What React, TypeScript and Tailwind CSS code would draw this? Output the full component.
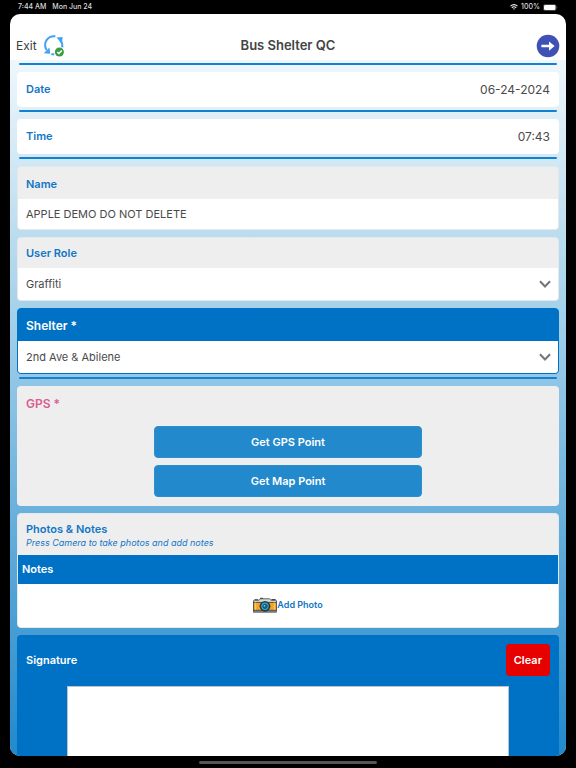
import type { ReactNode } from 'react';

function Divider() {
  return <hr className="mx-0.5 -mt-1 h-0.5 shrink-0 rounded-full border-0 bg-[#1480d0]" />;
}

function InlineField({ id, label, value }: { id: string; label: string; value: string }) {
  return (
    <div className="flex h-[35px] shrink-0 items-center justify-between rounded bg-white px-[9px]">
      <label htmlFor={id} className="text-[11px] font-semibold text-[#1276c6]">{label}</label>
      <input id={id} defaultValue={value} className="w-40 bg-transparent text-right text-xs text-[#4a4a4a] outline-none" />
    </div>
  );
}

function SelectBox({ id, value }: { id: string; value: string }) {
  return (
    <div className="relative flex h-8 items-center bg-white">
      <select id={id} defaultValue={value} className="h-full w-full appearance-none bg-transparent px-2 text-[11px] text-[#4a4a4a] outline-none">
        <option>{value}</option>
      </select>
      <svg viewBox="0 0 12 8" className="pointer-events-none absolute right-[7px] h-2 w-3" fill="none" stroke="#777" strokeWidth="2.1">
        <path d="M1 1.2 L6 6.4 L11 1.2" />
      </svg>
    </div>
  );
}

function ActionButton({ children }: { children: ReactNode }) {
  return (
    <button type="button" className="h-8 w-1/2 rounded border border-[#2b90d2] bg-[#2189cc] text-[11px] font-semibold text-white">
      {children}
    </button>
  );
}

function SyncIcon() {
  return (
    <svg viewBox="0 0 22 22" className="h-[22px] w-[22px]" fill="none">
      <g stroke="#3fa2f5" strokeWidth="2">
        <path d="M12.4 1.3 Q7 .6 3.9 4.6 Q.4 9.6 3.6 15" />
        <path d="M17 4.8 Q19.8 8 19.3 12.4" />
        <path d="M8.4 18.9 L11.2 19.4" />
      </g>
      <path d="M13.4 2.6 L19.6 2 L19 8.4 Z" fill="#3fa2f5" />
      <path d="M6.4 12.6 L7.2 18.8 L.8 18.2 Z" fill="#3fa2f5" />
      <circle cx="16.4" cy="17" r="4.5" fill="#3b9c45" />
      <path d="M14.2 17 L15.9 18.6 L18.8 15.5" stroke="#fff" strokeWidth="1.4" />
    </svg>
  );
}

function CameraIcon() {
  return (
    <svg viewBox="0 0 24 16" className="h-4 w-6">
      <path d="M1.5 2.2 H5 V4 H1.5 Z M18.5 2 H22.5 V4 H18.5 Z M7 .8 H10 V2 H7 Z" fill="#444b50" />
      <path d="M.5 5.5 V4 Q.5 3.2 1.5 3.2 H6 L7.5 1.8 H16.5 L18 3.2 H22.5 Q23.5 3.2 23.5 4 V5.5 Z" fill="#d5dde0" stroke="#394046" strokeWidth=".8" />
      <rect x=".5" y="5.3" width="23" height="8" fill="#f5a32a" stroke="#394046" strokeWidth=".8" />
      <rect x=".5" y="13.2" width="23" height="2" fill="#7d8589" stroke="#394046" strokeWidth=".6" />
      <path d="M2.7 5.5 V13 M21.3 5.5 V13" stroke="#fbd04d" strokeWidth="1" />
      <circle cx="12" cy="9.3" r="5.4" fill="#30383e" />
      <circle cx="12" cy="9.3" r="3.7" fill="#27b1d5" />
      <circle cx="12" cy="9.3" r="2.2" fill="#176f91" stroke="#223b48" strokeWidth=".7" />
      <circle cx="11.4" cy="8.7" r=".8" fill="#71e0f2" />
    </svg>
  );
}

function StatusBar() {
  return (
    <div className="flex h-3.5 shrink-0 items-center justify-between px-[18px] text-[7px] font-medium text-[#dedede]">
      <div className="flex gap-1.5">
        <span>7:44 AM</span>
        <span>Mon Jun 24</span>
      </div>
      <div className="flex items-center gap-[3px]">
        <svg viewBox="0 0 8 6" className="h-1.5 w-2" fill="none" stroke="#eee" strokeWidth="1.1">
          <path d="M.5 2.2 Q4 -.9 7.5 2.2 M1.8 3.7 Q4 1.9 6.2 3.7" />
          <path d="M3 4.7 Q4 4 5 4.7 L4 5.8 Z" fill="#eee" stroke="none" />
        </svg>
        <span>100%</span>
        <svg viewBox="0 0 15 7" className="h-[7px] w-[15px]">
          <rect x=".4" y=".4" width="12.7" height="6.2" rx="1.8" fill="none" stroke="#777" strokeWidth=".6" />
          <rect x="1" y="1" width="11.5" height="5" rx="1.2" fill="#fff" />
          <path d="M13.8 2.4 Q15 3.5 13.8 4.6 Z" fill="#777" />
        </svg>
      </div>
    </div>
  );
}

export default function App() {
  return (
    <div className="flex h-screen flex-col overflow-hidden bg-black font-['Inter','Liberation_Sans',sans-serif]">
      <StatusBar />
      <main className="mx-2.5 flex min-h-0 flex-1 flex-col overflow-hidden rounded-[10px] bg-white">
        <header className="grid h-[46px] shrink-0 grid-cols-[1fr_auto_1fr] items-center px-1.5 pt-[18px]">
          <div className="flex items-center gap-1.5">
            <button type="button" className="text-xs text-[#3c3c3c]">Exit</button>
            <button type="button" aria-label="Sync"><SyncIcon /></button>
          </div>
          <h1 className="text-[13px] font-semibold text-[#444]">Bus Shelter QC</h1>
          <button type="button" aria-label="Next" className="justify-self-end">
            <svg viewBox="0 0 24 24" className="h-6 w-6">
              <circle cx="12" cy="12" r="11.3" fill="#3f51b5" />
              <path d="M5.4 10.8 H13 V7.4 L18.6 12 L13 16.7 V13.3 H5.4 Z" fill="#fff" />
            </svg>
          </button>
        </header>

        <form className="flex min-h-0 flex-1 flex-col gap-[7px] overflow-hidden bg-linear-to-b/srgb from-[#eff7fc] via-[#a1cfe9] via-38% to-[#2189cc] px-[7px] pt-[7px]">
          <Divider />
          <InlineField id="date" label="Date" value="06-24-2024" />
          <Divider />
          <InlineField id="time" label="Time" value="07:43" />
          <Divider />

          <section className="shrink-0 overflow-hidden rounded border border-[#e5e8ea] bg-[#eee]">
            <label htmlFor="name" className="flex h-8 items-center px-2 pt-0.5 text-[11px] font-semibold text-[#1276c6]">Name</label>
            <input id="name" defaultValue="APPLE DEMO DO NOT DELETE" className="block h-[30px] w-full bg-white px-2 text-[11px] text-[#4a4a4a] outline-none" />
          </section>

          <section className="shrink-0 overflow-hidden rounded border border-[#e5e8ea] bg-[#eee]">
            <label htmlFor="role" className="flex h-[30px] items-center px-2 text-[11px] font-semibold text-[#1276c6]">User Role</label>
            <SelectBox id="role" value="Graffiti" />
          </section>

          <section className="shrink-0 overflow-hidden rounded border border-[#0072c6] bg-[#0072c6]">
            <label htmlFor="shelter" className="flex h-8 items-center px-2 pt-0.5 text-xs font-semibold text-white">Shelter *</label>
            <SelectBox id="shelter" value="2nd Ave & Abilene" />
          </section>
          <Divider />

          <section className="flex shrink-0 flex-col rounded bg-[#eee] px-[3px] pt-2 pb-[9px]">
            <h2 className="px-1.5 text-xs leading-5 font-semibold text-[#dc5c93]">GPS *</h2>
            <div className="flex flex-col items-center gap-[7px] pt-3">
              <ActionButton>Get GPS Point</ActionButton>
              <ActionButton>Get Map Point</ActionButton>
            </div>
          </section>

          <section className="shrink-0 overflow-hidden rounded border border-[#e5e8ea] bg-[#eee]">
            <div className="h-[41px] px-2 pt-[7px] text-[#1276c6]">
              <h2 className="text-[11px] leading-4 font-semibold">Photos &amp; Notes</h2>
              <p className="text-[9px] leading-3 italic">Press Camera to take photos and add notes</p>
            </div>
            <h3 className="flex h-[29px] items-center bg-[#0072c6] px-1 text-[11px] font-semibold text-white">Notes</h3>
            <div className="flex h-[43px] items-center justify-center bg-white pb-0.5">
              <button type="button" className="flex items-center text-[9px] font-semibold text-[#1276c6]">
                <CameraIcon />
                Add Photo
              </button>
            </div>
          </section>

          <section className="flex min-h-0 flex-1 flex-col rounded-t bg-[#0072c6] pt-[9px]">
            <div className="flex shrink-0 items-center justify-between px-[9px]">
              <h2 className="text-[11px] font-semibold text-white">Signature</h2>
              <button type="button" className="h-8 rounded bg-[#e60000] px-2 text-[11px] font-semibold text-white">Clear</button>
            </div>
            <div className="mx-[50px] mt-2.5 min-h-0 flex-1 border border-b-0 border-[#b9c4cc] bg-white" />
          </section>
        </form>
      </main>
      <div className="flex h-3 shrink-0 items-center justify-center">
        <div className="h-[3px] w-[31%] rounded-full bg-[#555]" />
      </div>
    </div>
  );
}
